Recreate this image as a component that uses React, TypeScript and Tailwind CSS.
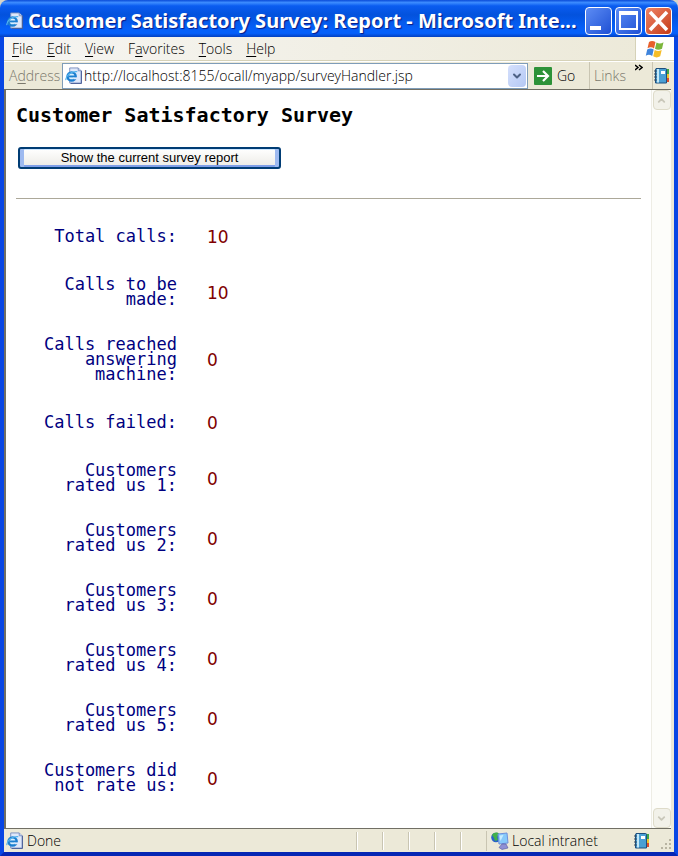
import { ChevronDown, ChevronUp } from "lucide-react";

const menus = [
  { before: "", key: "F", after: "ile" },
  { before: "", key: "E", after: "dit" },
  { before: "", key: "V", after: "iew" },
  { before: "F", key: "a", after: "vorites" },
  { before: "", key: "T", after: "ools" },
  { before: "", key: "H", after: "elp" },
];

const results = [
  { label: "Total calls:", value: 10 },
  { label: "Calls to be made:", value: 10 },
  { label: "Calls reached answering machine:", value: 0 },
  { label: "Calls failed:", value: 0 },
  { label: "Customers rated us 1:", value: 0 },
  { label: "Customers rated us 2:", value: 0 },
  { label: "Customers rated us 3:", value: 0 },
  { label: "Customers rated us 4:", value: 0 },
  { label: "Customers rated us 5:", value: 0 },
  { label: "Customers did not rate us:", value: 0 },
];

function PageIcon({ className }: { className: string }) {
  return (
    <svg className={className} viewBox="0 0 18 18" aria-hidden="true">
      <path d="M5 1h9l3 3v13H5z" fill="#dfe8fa" stroke="#7a8fc0" />
      <path d="M14 1v3h3" fill="#c9d6f0" stroke="#7a8fc0" />
      <path d="M17.5 4v13.5H6" fill="none" stroke="#4a5f98" />
      <circle cx="7" cy="10" r="4.3" fill="#d8f0ff" stroke="#1c7fd0" strokeWidth="2.6" />
      <path d="M4 10h7" stroke="#1c7fd0" strokeWidth="2" />
      <path d="M9 12h4" stroke="#dfe8fa" strokeWidth="2" />
      <path d="M1 14C0 10 6 4 13 5" fill="none" stroke="#53b4ee" strokeWidth="1.3" />
    </svg>
  );
}

function BookIcon() {
  return (
    <svg className="h-[18px] w-4 shrink-0" viewBox="0 0 16 18" aria-hidden="true">
      <path d="M13 2h3v5h-3z" fill="#3fa648" />
      <path d="M13 7h3v4h-3z" fill="#f0c52c" />
      <path d="M13 11h3v4h-3z" fill="#dd4b2a" />
      <path d="M3 1.500h9.500a1 1 0 0 1 1 1v13.500H2.500v-13z" fill="#4a9fd4" stroke="#1f4f7c" />
      <path d="M5 2v13.500" stroke="#c4e8f8" strokeWidth="2" />
      <rect x="8" y="4" width="4" height="3" fill="#fff" />
      <path d="M1 4h3M1 7h3M1 10h3M1 13h3" stroke="#324a62" />
    </svg>
  );
}

function WindowsFlag() {
  return (
    <svg className="h-5 w-5" viewBox="0 0 20 20" aria-hidden="true">
      <path d="M4 3c2-1.500 4-1.500 6.500 0L9 9.500C7 8 5 8 2.500 9.300z" fill="#e8602c" />
      <path d="M11.500 3.500c2.500 1.300 4.500 1.200 7-.3L17 9.700c-2.500 1.400-4.500 1.400-7 .1z" fill="#7cb63c" />
      <path d="M2.200 10.500c2.500-1.300 4.500-1.300 6.500.1L7.200 17C5 15.500 3 15.500.8 16.800z" fill="#3f84dc" />
      <path d="M9.700 11c2.500 1.300 4.500 1.300 7-.1l-1.500 6.400c-2.500 1.500-4.700 1.500-7 0z" fill="#f6bd28" />
    </svg>
  );
}

function NetworkIcon() {
  return (
    <svg className="h-[18px] w-[18px] shrink-0" viewBox="0 0 18 18" aria-hidden="true">
      <circle cx="5" cy="5.500" r="4.800" fill="#2a62c8" />
      <path d="M1 3c2-3 6-3 7-1L6 5l1 3-3 1-1-3z" fill="#41b04a" />
      <path d="M7 2l9-1 1 10-9 1z" fill="#86c9fa" stroke="#6d8fdc" />
      <path d="M8.500 3.500l4-.5-3 6z" fill="#c8ecff" />
      <path d="M11 12h4l2 4-6 1.500-3-2z" fill="#8f90d4" stroke="#5458a0" strokeWidth=".6" />
    </svg>
  );
}

function TitleBar() {
  return (
    <header className="flex h-[37px] items-center rounded-t-lg bg-[linear-gradient(180deg,#0a4bd8_0%,#3c8cff_7%,#0a5cf0_16%,#0352dd_40%,#0560fa_78%,#0560fa_90%,#0340c0_100%)] px-[6px]">
      <PageIcon className="mt-1 h-[17px] w-[17px] shrink-0" />
      <h1 className="ml-[5px] mt-1 min-w-0 flex-1 truncate font-['Noto_Sans',sans-serif] text-xl leading-7 font-bold text-white [text-shadow:1px_1px_1px_#0a1883]">
        Customer Satisfactory Survey: Report - Microsoft Inte...
      </h1>
      <div className="mt-1 flex gap-[3px]">
        <button aria-label="Minimize" className="h-7 w-[27px] rounded border border-white bg-linear-to-br from-[#5d8cf4] to-[#1f4fd4]">
          <svg viewBox="0 0 25 26" className="h-full w-full"><path d="M4 20h11" stroke="#fff" strokeWidth="4" /></svg>
        </button>
        <button aria-label="Maximize" className="h-7 w-[27px] rounded border border-white bg-linear-to-br from-[#5d8cf4] to-[#1f4fd4]">
          <svg viewBox="0 0 25 26" className="h-full w-full"><path d="M4 5v16h17V5z" fill="none" stroke="#fff" strokeWidth="2" /><path d="M3 5h19" stroke="#fff" strokeWidth="4" /></svg>
        </button>
        <button aria-label="Close" className="h-7 w-[27px] rounded border border-white bg-linear-to-br from-[#ee8264] to-[#c43b14]">
          <svg viewBox="0 0 25 26" className="h-full w-full"><path d="M4 4l17 18M21 4L4 22" stroke="#fff" strokeWidth="3.500" /></svg>
        </button>
      </div>
    </header>
  );
}

function MenuBar() {
  return (
    <nav className="flex h-6 items-stretch border-b border-[#d6d2b8] bg-linear-to-r from-[#f6f5f2] to-[#ece9d8] pl-2 text-sm leading-5">
      <div className="flex flex-1 items-center gap-[14px]">
        {menus.map((menu) => (
          <button key={menu.key + menu.after}>
            {menu.before}
            <span className="underline underline-offset-2">{menu.key}</span>
            {menu.after}
          </button>
        ))}
      </div>
      <div className="flex w-[39px] items-center justify-center border-l border-[#d6d2b8] bg-white">
        <WindowsFlag />
      </div>
    </nav>
  );
}

function AddressBar() {
  return (
    <div className="flex h-7 items-center border-t border-white bg-[#ece9d8] text-sm leading-5">
      <label htmlFor="address" className="w-[58px] pl-[5px] text-[#7a786c]">
        A<span className="underline underline-offset-2">d</span>dress
      </label>
      <div className="flex h-[26px] min-w-0 flex-1 items-center border border-[#7f9db9] bg-white pl-[2px]">
        <PageIcon className="h-[17px] w-[17px] shrink-0" />
        <input
          id="address"
          className="ml-[2px] min-w-0 flex-1 bg-transparent outline-none"
          defaultValue="http://localhost:8155/ocall/myapp/surveyHandler.jsp"
        />
        <button aria-label="Show history" className="m-px flex h-[22px] w-[18px] items-center justify-center rounded-sm bg-linear-to-br from-[#d5e0fc] to-[#b4c8f4]">
          <ChevronDown size={12} strokeWidth={4} color="#4d6185" />
        </button>
      </div>
      <button className="flex w-[61px] items-center gap-[5px] pl-[6px]">
        <svg className="h-[18px] w-[18px]" viewBox="0 0 18 18" aria-hidden="true">
          <rect width="18" height="18" rx="1" fill="#2d9238" />
          <path d="M3 9h11M9 4l5 5-5 5" fill="none" stroke="#fff" strokeWidth="2.200" />
        </svg>
        Go
      </button>
      <div className="flex h-full w-[63px] justify-between border-l border-[#c9c5b2] pl-1 pr-[9px] text-[#7a786c]">
        <span className="self-center">Links</span>
        <button aria-label="More links" className="mt-[2px] h-2">
          <svg className="h-2 w-2" viewBox="0 0 8 8" aria-hidden="true">
            <path d="M0 1l3 2.500L0 6M4 1l3 2.500L4 6" fill="none" stroke="#000" strokeWidth="1.500" />
          </svg>
        </button>
      </div>
      <div className="flex h-full w-[22px] items-center border-l border-[#c9c5b2]">
        <BookIcon />
      </div>
    </div>
  );
}

function ScrollBar() {
  return (
    <div className="flex w-5 flex-col items-center justify-between border-l border-[#eeede5] bg-[#fdfdfa]">
      <button aria-label="Scroll up" disabled className="flex h-5 w-[18px] items-center justify-center rounded-sm border border-[#dedbc9] bg-[#f2f1e9]">
        <ChevronUp size={11} strokeWidth={4} color="#c9c7ba" />
      </button>
      <button aria-label="Scroll down" disabled className="flex h-5 w-[18px] items-center justify-center rounded-sm border border-[#dedbc9] bg-[#f2f1e9]">
        <ChevronDown size={11} strokeWidth={4} color="#c9c7ba" />
      </button>
    </div>
  );
}

function SurveyReport() {
  return (
    <main className="min-w-0 flex-1 px-[10px] pt-[13px] pb-4">
      <h2 className="font-['DejaVu_Sans_Mono',monospace] text-xl leading-6 font-bold">
        Customer Satisfactory Survey
      </h2>
      <button className="mt-5 ml-[2px] h-[22px] w-[263px] rounded-[3px] border-2 border-[#003c74] bg-linear-to-b from-white to-[#ecebe5] font-['Liberation_Sans',sans-serif] text-[13px] leading-4 shadow-[inset_4px_0_0_#9ebaf0,inset_-4px_0_0_#9ebaf0,inset_0_1px_0_#cee7ff,inset_0_-2px_0_#7f9fe8]">
        Show the current survey report
      </button>
      <hr className="mt-[29px] border-t border-[#aca899]" />
      <table className="mt-3 border-collapse">
        <tbody>
          {results.map((row) => (
            <tr key={row.label}>
              <th scope="row" className="w-[161px] py-[15px] pl-5 text-right align-middle font-['DejaVu_Sans_Mono',monospace] text-[17px] leading-[15px] font-normal text-[#000080]">
                {row.label}
              </th>
              <td className="pt-4 pb-[14px] pl-[30px] align-middle font-['DejaVu_Sans',sans-serif] text-[17px] leading-[21px] font-normal text-[#800000]">
                {row.value}
              </td>
            </tr>
          ))}
        </tbody>
      </table>
    </main>
  );
}

function StatusBar() {
  return (
    <footer className="flex h-[23px] items-center bg-[#ece9d8] pl-[2px] text-sm leading-5">
      <PageIcon className="h-[17px] w-[17px] shrink-0" />
      <span className="ml-1 flex-1">Done</span>
      <div className="flex h-[18px]">
        {[1, 2, 3, 4, 5].map((pane) => (
          <span key={pane} className="w-[26px] border-l border-[#c9c5b2] shadow-[inset_1px_0_0_#fff]" />
        ))}
      </div>
      <div className="flex w-[188px] items-center border-l border-[#c9c5b2] pl-1">
        <NetworkIcon />
        <span className="ml-[3px] flex-1">Local intranet</span>
        <BookIcon />
        <svg className="mr-px ml-3 h-3 w-3 self-end" viewBox="0 0 12 12" aria-hidden="true">
          <path d="M8 0h2v2H8zM4 4h2v2H4zM8 4h2v2H8zM0 8h2v2H0zM4 8h2v2H4zM8 8h2v2H8z" fill="#b8b4a2" />
        </svg>
      </div>
    </footer>
  );
}

export default function App() {
  return (
    <div className="flex min-h-screen flex-col bg-[#d8d4c8] font-['Open_Sans',sans-serif] font-light text-black">
      <TitleBar />
      <div className="flex flex-1 flex-col border-x-4 border-b-4 border-x-[#0846e4] border-b-[#0626b4] bg-[#ece9d8]">
        <MenuBar />
        <AddressBar />
        <div className="mr-[3px] flex flex-1 border-y border-l-2 border-[#716f64] bg-white">
          <SurveyReport />
          <ScrollBar />
        </div>
        <StatusBar />
      </div>
    </div>
  );
}
